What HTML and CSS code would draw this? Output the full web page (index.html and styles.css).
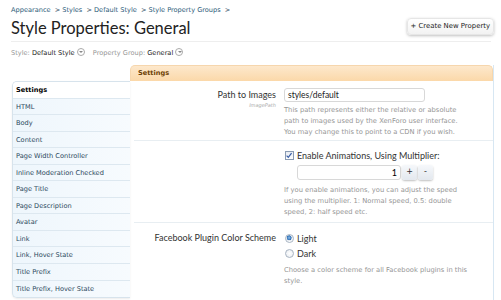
FILE: index.html
```html
<!DOCTYPE html>
<html lang="en">
<head>
    <meta charset="UTF-8">
    <meta name="viewport" content="width=device-width, initial-scale=1.0">
    <title>Style Properties: General</title>
    <link rel="stylesheet" href="styles.css">
</head>
<body>
    <div class="page">
        <div class="breadcrumb">
            <a href="#">Appearance</a> &gt;
            <a href="#">Styles</a> &gt;
            <a href="#">Default Style</a> &gt;
            <a href="#">Style Property Groups</a> &gt;
        </div>

        <div class="title-bar">
            <h1>Style Properties: General</h1>
            <a href="#" class="top-button">+ Create New Property</a>
        </div>

        <div class="chooser">
            <span class="muted">Style:</span> Default Style <span class="drop"></span>
            <span class="muted gap">Property Group:</span> General <span class="drop"></span>
        </div>

        <div class="tabs">
            <ul class="side-nav">
                <li class="active">Settings</li>
                <li>HTML</li>
                <li>Body</li>
                <li>Content</li>
                <li>Page Width Controller</li>
                <li>Inline Moderation Checked</li>
                <li>Page Title</li>
                <li>Page Description</li>
                <li>Avatar</li>
                <li>Link</li>
                <li>Link, Hover State</li>
                <li>Title Prefix</li>
                <li>Title Prefix, Hover State</li>
            </ul>

            <div class="panel">
                <h3 class="panel-head">Settings</h3>

                <div class="row first">
                    <div class="row-label">
                        Path to Images
                        <span class="hint">ImagePath</span>
                    </div>
                    <div class="row-control">
                        <div class="text-box">styles/default</div>
                        <p class="explain">This path represents either the relative or absolute path to images used by the XenForo user interface. You may change this to point to a CDN if you wish.</p>
                    </div>
                </div>

                <div class="row second">
                    <div class="row-label"></div>
                    <div class="row-control">
                        <label class="check-line">
                            <span class="checkbox">
                                <svg width="9" height="9" viewBox="0 0 9 9"><path d="M1.8 4.6 L3.7 6.6 L7.4 1.8" fill="none" stroke="#3a5fa8" stroke-width="1.4"/></svg>
                            </span>
                            Enable Animations, Using Multiplier:
                        </label>
                        <div class="spinner">
                            <div class="spin-box">1</div>
                            <span class="spin-btn">+</span>
                            <span class="spin-btn">-</span>
                        </div>
                        <p class="explain">If you enable animations, you can adjust the speed using the multiplier. 1: Normal speed, 0.5: double speed, 2: half speed etc.</p>
                    </div>
                </div>

                <div class="row third">
                    <div class="row-label">Facebook Plugin Color Scheme</div>
                    <div class="row-control">
                        <label class="radio-line"><span class="radio on"></span> Light</label>
                        <label class="radio-line"><span class="radio"></span> Dark</label>
                        <p class="explain">Choose a color scheme for all Facebook plugins in this style.</p>
                    </div>
                </div>
            </div>
        </div>
    </div>
</body>
</html>
```

FILE: styles.css
```css
* {
    box-sizing: border-box;
}
body {
    margin: 0;
    background: #fff;
    font-family: "DejaVu Sans", Verdana, sans-serif;
    font-size: 6.6px;
    color: #000;
}
.page {
    padding: 5px 7px 0 11px;
}
.breadcrumb {
    height: 10px;
    line-height: 10px;
    color: #2b485c;
}
.breadcrumb a {
    color: #2b5a78;
    text-decoration: none;
    margin-right: 2px;
}
.title-bar {
    display: flex;
    justify-content: space-between;
    align-items: center;
    height: 27px;
    border-bottom: 1px solid #eee;
    margin-right: 3px;
}
h1 {
    margin: 0;
    font-family: Lato, "Liberation Sans", sans-serif;
    font-weight: normal;
    font-size: 16.5px;
    color: #222;
}
.top-button {
    display: block;
    height: 17px;
    line-height: 15px;
    padding: 0 3px;
    margin: 0 -3px 4px 0;
    border: 1px solid #e6e6e6;
    border-radius: 4px;
    background: linear-gradient(#fff, #f2f2f2);
    box-shadow: 0 1px 3px rgba(0, 0, 0, 0.25);
    color: #222;
    text-decoration: none;
    font-size: 6.9px;
}
.chooser {
    height: 23px;
    line-height: 23px;
    color: #222;
}
.muted {
    color: #969696;
}
.gap {
    margin-left: 6px;
}
.drop {
    display: inline-block;
    width: 8px;
    height: 8px;
    border: 1px solid #aaa;
    border-radius: 50%;
    vertical-align: -1px;
    position: relative;
}
.drop::after {
    content: "";
    position: absolute;
    left: 1.5px;
    top: 2px;
    border-left: 2px solid transparent;
    border-right: 2px solid transparent;
    border-top: 2.5px solid #888;
}
.tabs {
    display: flex;
    align-items: flex-start;
}
.side-nav {
    list-style: none;
    margin: 16px 0 0 1px;
    padding: 0;
    width: 118px;
    border: 1px solid #d7e3ec;
    border-right: none;
    border-radius: 5px 0 0 5px;
    background: linear-gradient(to right, #eef6fc, #f7fbfe);
    box-shadow: 0 1px 2px rgba(0, 0, 0, 0.08);
    overflow: hidden;
}
.side-nav li {
    height: 16.55px;
    line-height: 16px;
    padding-left: 3px;
    border-bottom: 1px solid #dde8f0;
    color: #2b485c;
}
.side-nav li:last-child {
    border-bottom: none;
}
.side-nav li.active {
    background: #fff;
    color: #000;
    font-weight: bold;
}
.panel {
    flex: 1;
    min-height: 240px;
    border-right: 1px solid #d7e7f3;
}
.panel-head {
    margin: 0;
    height: 16px;
    line-height: 15px;
    padding-left: 7px;
    border: 1px solid #f6d6ad;
    border-bottom: none;
    border-radius: 5px 5px 0 0;
    background: linear-gradient(#fde8cc, #fbd8a9);
    color: #6d3f03;
    font-size: 6.6px;
    font-weight: bold;
}
.row {
    display: grid;
    grid-template-columns: 142px 1fr;
    column-gap: 8px;
    margin-left: 4px;
    border-bottom: 1px solid #e8eef2;
}
.row.first {
    padding-top: 7px;
    height: 60px;
}
.row.second {
    padding-top: 7px;
    height: 82px;
}
.row.third {
    padding-top: 8px;
    border-bottom: none;
}
.row-label {
    text-align: right;
    font-family: Lato, "Liberation Sans", sans-serif;
    font-size: 9px;
    line-height: 14px;
    color: #333;
}
.hint {
    display: block;
    font-family: "DejaVu Sans", sans-serif;
    font-size: 5px;
    font-style: italic;
    line-height: 7px;
    color: #aaa;
}
.text-box {
    width: 141px;
    height: 14px;
    line-height: 12px;
    padding-left: 3px;
    border: 1px solid #d8d8d8;
    border-radius: 3px;
    font-family: Lato, "Liberation Sans", sans-serif;
    font-size: 8.5px;
    color: #222;
}
.explain {
    margin: 3px 0 0;
    width: 184px;
    line-height: 10.8px;
    font-size: 6.75px;
    color: #969696;
}
.row.first .explain {
    width: 178px;
}
.check-line,
.radio-line {
    display: flex;
    align-items: center;
    gap: 3px;
    height: 14px;
    font-family: Lato, "Liberation Sans", sans-serif;
    font-size: 9px;
    color: #333;
}
.radio-line {
    height: 15px;
}
.checkbox {
    display: inline-flex;
    width: 9px;
    height: 9px;
    margin-left: 1px;
    border: 1px solid #8a9bb3;
    background: linear-gradient(#e8ecf2, #fff);
}
.checkbox svg {
    margin: -1px 0 0 -1px;
}
.spinner {
    display: flex;
    gap: 1px;
    margin: 3px 0 0 13px;
}
.spin-box {
    width: 104px;
    height: 15px;
    line-height: 13px;
    padding-right: 3px;
    text-align: right;
    border: 1px solid #d8d8d8;
    border-radius: 3px;
    font-family: Lato, "Liberation Sans", sans-serif;
    font-size: 9px;
}
.spin-btn {
    width: 15px;
    height: 15px;
    line-height: 14px;
    text-align: center;
    border-radius: 3px;
    background: linear-gradient(#f6f8fb, #e3e8ee);
    box-shadow: 0 1px 2px rgba(0, 0, 0, 0.25);
    font-size: 8px;
    color: #333;
}
.row.second .explain {
    margin-top: 5px;
}
.radio {
    display: inline-block;
    width: 9px;
    height: 9px;
    margin-left: 1px;
    border: 1px solid #a8b4c2;
    border-radius: 50%;
    background: radial-gradient(#fff, #e6eaef);
}
.radio.on {
    background: radial-gradient(circle at 45% 40%, #8fc0ec 0, #2f6fb5 2.2px, #dfe6ee 2.6px, #fff 4px);
}
.row.third .explain {
    margin-top: 4px;
    width: 193px;
}
```
